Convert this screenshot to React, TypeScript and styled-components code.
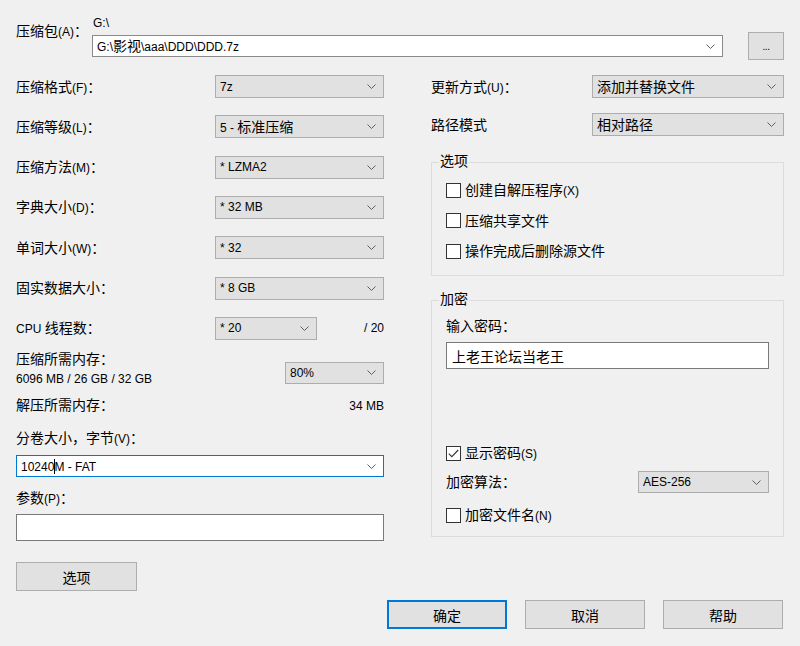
import * as React from 'react'
import styled, { createGlobalStyle } from 'styled-components'

const GlobalStyle = createGlobalStyle`
  body {
    margin: 0;
    background: #f0f0f0;
  }
`

const Page = styled.div`
  width: 800px;
  height: 646px;
  box-sizing: border-box;
  padding: 0 16px;
  overflow: hidden;
  background: #f0f0f0;
  color: #000;
  font-family: 'Liberation Sans', 'Noto Sans CJK SC', sans-serif;
  font-size: 12px;
`

const Han = styled.span`
  font-family: 'Noto Sans CJK SC', sans-serif;
  font-size: 14px;
  line-height: 1;
`

// latin runs stay 12px, CJK runs get the bigger CJK face
const T = ({ children }: { children: string }) => {
  const parts = children.split(/([\u2E80-\u9FFF\u3000-\u303F\uFF00-\uFFEF]+)/)
  return (
    <>
      {parts.map((p, i) => (i % 2 ? <Han key={i}>{p}</Han> : p))}
    </>
  )
}

const TopRow = styled.div`
  display: flex;
  align-items: flex-start;
  height: 60px;
`

const TopLabel = styled.div`
  width: 76px;
  padding-top: 22px;
  line-height: 20px;
`

const PathCol = styled.div`
  flex: 1;
  padding-top: 14px;
  margin-right: 25px;
`

const Caption = styled.div`
  line-height: 18px;
  margin-bottom: 3px;
  padding-left: 1px;
`

const Main = styled.div`
  display: grid;
  grid-template-columns: 368px 353px;
  column-gap: 47px;
  margin-top: 15px;
`

const Column = styled.div`
  display: flex;
  flex-direction: column;
`

const FieldRow = styled.div<{ $label: number; $gap?: number }>`
  display: grid;
  grid-template-columns: ${({ $label }) => $label}px 1fr;
  align-items: center;
  height: 23px;
  margin-bottom: ${({ $gap }) => $gap ?? 0}px;
  white-space: nowrap;
`

const Select = styled.div<{
  $w?: number
  $h?: number
  $white?: boolean
  $focus?: boolean
}>`
  display: flex;
  align-items: center;
  justify-content: space-between;
  box-sizing: border-box;
  width: ${({ $w }) => ($w ? `${$w}px` : '100%')};
  height: ${({ $h }) => $h ?? 23}px;
  padding: 0 7px 0 4px;
  background: ${({ $white }) => ($white ? '#fff' : '#e1e1e1')};
  border: 1px solid
    ${({ $focus, $white }) =>
      $focus ? '#0078d7' : $white ? '#8a8a8a' : '#adadad'};
  white-space: nowrap;
`

const Chevron = () => (
  <svg width="9" height="5" viewBox="0 0 9 5" style={{ flexShrink: 0 }}>
    <polyline
      points="0.5,0.5 4.5,4.5 8.5,0.5"
      fill="none"
      stroke="#5f5f5f"
      strokeWidth="1"
    />
  </svg>
)

const Drop = ({
  value,
  w,
  h,
  white,
  focus,
  caretAt,
}: {
  value: string
  w?: number
  h?: number
  white?: boolean
  focus?: boolean
  caretAt?: number
}) => (
  <Select $w={w} $h={h} $white={white} $focus={focus}>
    <span>
      {caretAt !== undefined ? (
        <>
          <T>{value.slice(0, caretAt)}</T>
          <Caret />
          <T>{value.slice(caretAt)}</T>
        </>
      ) : (
        <T>{value}</T>
      )}
    </span>
    <Chevron />
  </Select>
)

const Caret = styled.span`
  display: inline-block;
  width: 1px;
  height: 15px;
  margin: 0 -1px 0 0;
  background: #000;
  vertical-align: -3px;
`

const CpuCell = styled.div`
  display: flex;
  align-items: center;
  justify-content: space-between;
`

const MemoryRow = styled.div`
  display: flex;
  justify-content: space-between;
  align-items: flex-start;
  margin-top: 11px;
`

const TextLine = styled.div<{ $top?: number }>`
  line-height: 19px;
  margin-top: ${({ $top }) => $top ?? 0}px;
  white-space: nowrap;
`

const MemoryDrop = styled.div`
  margin-top: 11px;
`

const SplitLine = styled.div`
  display: flex;
  justify-content: space-between;
  line-height: 19px;
  margin-top: 8px;
`

const Block = styled.div<{ $top: number }>`
  margin-top: ${({ $top }) => $top}px;
`

const TextBox = styled.div<{ $h: number }>`
  box-sizing: border-box;
  height: ${({ $h }) => $h}px;
  padding: 0 5px;
  display: flex;
  align-items: center;
  background: #fff;
  border: 1px solid #7a7a7a;
`

const Button = styled.div<{ $w?: number; $h?: number; $primary?: boolean }>`
  box-sizing: border-box;
  width: ${({ $w }) => $w ?? 120}px;
  height: ${({ $h }) => $h ?? 29}px;
  display: flex;
  align-items: center;
  justify-content: center;
  background: #e1e1e1;
  border: 1px solid ${({ $primary }) => ($primary ? '#0078d7' : '#adadad')};
  box-shadow: ${({ $primary }) =>
    $primary ? 'inset 0 0 0 1px #0078d7' : 'none'};
`

const Browse = styled(Button)`
  margin-top: 32px;
  font-size: 10px;
  letter-spacing: -0.5px;
`

const OptionsButton = styled(Button)`
  margin-top: 21px;
`

const Group = styled.fieldset<{ $top: number; $bottom: number }>`
  margin: ${({ $top }) => $top}px 0 0;
  padding: 0 14px ${({ $bottom }) => $bottom}px;
  border: 1px solid #dcdcdc;
  min-width: 0;
`

const Legend = styled.legend`
  margin-left: -7px;
  padding: 0 1px;
  line-height: 18px;
`

const CheckRow = styled.div<{ $top: number }>`
  display: flex;
  align-items: center;
  gap: 4px;
  height: 20px;
  margin-top: ${({ $top }) => $top}px;
  white-space: nowrap;
`

const Box = styled.span`
  box-sizing: border-box;
  width: 15px;
  height: 15px;
  flex-shrink: 0;
  display: flex;
  align-items: center;
  justify-content: center;
  background: #fff;
  border: 1px solid #333;
`

const Check = ({ label, top, checked }: { label: string; top: number; checked?: boolean }) => (
  <CheckRow $top={top}>
    <Box>
      {checked && (
        <svg width="11" height="9" viewBox="0 0 11 9">
          <polyline
            points="0.8,4.6 3.8,7.6 10.2,1"
            fill="none"
            stroke="#333"
            strokeWidth="1.1"
          />
        </svg>
      )}
    </Box>
    <span>
      <T>{label}</T>
    </span>
  </CheckRow>
)

const AlgoRow = styled.div`
  display: flex;
  align-items: center;
  justify-content: space-between;
  height: 22px;
  margin-top: 8px;
`

const ButtonBar = styled.div`
  display: flex;
  justify-content: flex-end;
  gap: 18px;
  margin: 9px 1px 0 0;
`

const leftRows: Array<[string, string]> = [
  ['压缩格式(F)：', '7z'],
  ['压缩等级(L)：', '5 - 标准压缩'],
  ['压缩方法(M)：', '* LZMA2'],
  ['字典大小(D)：', '* 32 MB'],
  ['单词大小(W)：', '* 32'],
  ['固实数据大小：', '* 8 GB'],
]

export default function App() {
  return (
    <Page>
      <GlobalStyle />
      <TopRow>
        <TopLabel>
          <T>压缩包(A)：</T>
        </TopLabel>
        <PathCol>
          <Caption>G:\</Caption>
          <Drop value="G:\影视\aaa\DDD\DDD.7z" white h={22} />
        </PathCol>
        <Browse $w={36} $h={28}>
          ...
        </Browse>
      </TopRow>

      <Main>
        <Column>
          {leftRows.map(([label, value]) => (
            <FieldRow key={label} $label={199} $gap={17.33}>
              <span>
                <T>{label}</T>
              </span>
              <Drop value={value} />
            </FieldRow>
          ))}
          <FieldRow $label={199}>
            <span>
              <T>CPU 线程数：</T>
            </span>
            <CpuCell>
              <Drop value="* 20" w={102} />
              <span>/ 20</span>
            </CpuCell>
          </FieldRow>

          <MemoryRow>
            <div>
              <TextLine>
                <T>压缩所需内存：</T>
              </TextLine>
              <TextLine>6096 MB / 26 GB / 32 GB</TextLine>
            </div>
            <MemoryDrop>
              <Drop value="80%" w={99} h={22} />
            </MemoryDrop>
          </MemoryRow>

          <SplitLine>
            <span>
              <T>解压所需内存：</T>
            </span>
            <span>34 MB</span>
          </SplitLine>

          <TextLine $top={14}>
            <T>分卷大小，字节(V)：</T>
          </TextLine>
          <Block $top={6.5}>
            <Drop value="10240M - FAT" white focus h={22} caretAt={5} />
          </Block>

          <TextLine $top={12.5}>
            <T>参数(P)：</T>
          </TextLine>
          <Block $top={5.5}>
            <TextBox $h={27} />
          </Block>

          <OptionsButton $w={121}>
            <T>选项</T>
          </OptionsButton>
        </Column>

        <Column>
          <FieldRow $label={161} $gap={15}>
            <span>
              <T>更新方式(U)：</T>
            </span>
            <Drop value="添加并替换文件" />
          </FieldRow>
          <FieldRow $label={161}>
            <span>
              <T>路径模式</T>
            </span>
            <Drop value="相对路径" />
          </FieldRow>

          <Group $top={17} $bottom={14}>
            <Legend>
              <T>选项</T>
            </Legend>
            <Check top={9} label="创建自解压程序(X)" />
            <Check top={10.5} label="压缩共享文件" />
            <Check top={10.5} label="操作完成后删除源文件" />
          </Group>

          <Group $top={15} $bottom={11}>
            <Legend>
              <T>加密</T>
            </Legend>
            <TextLine $top={8.5}>
              <T>输入密码：</T>
            </TextLine>
            <Block $top={5.5}>
              <TextBox $h={27}>
                <T>上老王论坛当老王</T>
              </TextBox>
            </Block>
            <Check top={74} checked label="显示密码(S)" />
            <AlgoRow>
              <span>
                <T>加密算法：</T>
              </span>
              <Drop value="AES-256" w={131} h={22} />
            </AlgoRow>
            <Check top={12} label="加密文件名(N)" />
          </Group>
        </Column>
      </Main>

      <ButtonBar>
        <Button $primary>
          <T>确定</T>
        </Button>
        <Button>
          <T>取消</T>
        </Button>
        <Button>
          <T>帮助</T>
        </Button>
      </ButtonBar>
    </Page>
  )
}
